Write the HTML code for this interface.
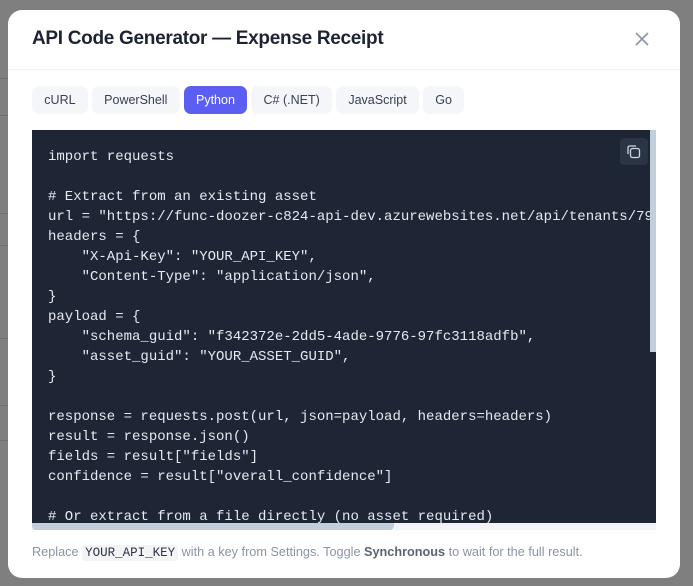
<!DOCTYPE html>
<html><head><style>
*{box-sizing:border-box;margin:0;padding:0}
body{width:693px;height:586px;background:#7f7f7f;position:relative;overflow:hidden;font-family:"Liberation Sans",sans-serif}
.bgl{position:absolute;left:0;width:8px;height:1px;background:#6f6f6f}
.modal{position:absolute;left:8px;top:10px;width:672px;height:568px;background:#fff;border-radius:14px;overflow:hidden}
.hd{height:60px;border-bottom:1px solid #eef0f3;position:relative}
.hd h1{position:absolute;left:24px;top:18px;font-size:19px;font-weight:600;color:#1c2434;letter-spacing:-0.3px}
.x{position:absolute;left:626px;top:21px}
.tabs{position:absolute;left:24px;top:76px;display:flex;gap:4px}
.tab{height:28px;padding:0 12.3px;line-height:28px;font-size:12.5px;color:#374151;background:#f5f6fa;border-radius:7px}
.tab.on{background:#5b5ef0;color:#fff}
.code{position:absolute;left:24px;top:120px;width:624px;height:393px;background:#1e2635;overflow:hidden}
pre{position:absolute;left:16px;top:17px;font-family:"Liberation Mono",monospace;font-size:14px;line-height:20px;color:#e6e9ef;white-space:pre}
.vs{position:absolute;left:642px;top:120px;width:6px;height:222px;background:#c3cedb}
.hs{position:absolute;left:24px;top:513px;width:624px;height:7px;background:#f1f3f6}
.hs div{width:362px;height:7px;background:#c3cedb;border-radius:0 0 4px 4px}
.cp{position:absolute;left:612px;top:128px;width:28px;height:27px;background:#2c3546;border-radius:4px}
.ft{position:absolute;left:24px;top:535px;font-size:12.7px;color:#8a94a6}
.ft code{font-family:"Liberation Mono",monospace;background:#f3f4f6;color:#2c3546;padding:1px 3px;border-radius:3px;font-size:12.5px}
.ft b{color:#5b6477}
</style></head><body>
<div class="bgl" style="top:78px"></div><div class="bgl" style="top:115px"></div><div class="bgl" style="top:213px"></div><div class="bgl" style="top:245px"></div><div class="bgl" style="top:338px"></div><div class="bgl" style="top:405px"></div><div class="bgl" style="top:440px"></div>
<div class="modal">
<div class="hd"><h1>API Code Generator — Expense Receipt</h1>
<svg class="x" width="16" height="16" viewBox="0 0 16 16"><path d="M2 2L14 14M14 2L2 14" stroke="#8a94a6" stroke-width="1.6" fill="none"/></svg></div>
<div class="tabs"><div class="tab">cURL</div><div class="tab">PowerShell</div><div class="tab on">Python</div><div class="tab">C# (.NET)</div><div class="tab">JavaScript</div><div class="tab">Go</div></div>
<div class="code"><pre>import requests

# Extract from an existing asset
url = "https://func-doozer-c824-api-dev.azurewebsites.net/api/tenants/79
headers = {
    "X-Api-Key": "YOUR_API_KEY",
    "Content-Type": "application/json",
}
payload = {
    "schema_guid": "f342372e-2dd5-4ade-9776-97fc3118adfb",
    "asset_guid": "YOUR_ASSET_GUID",
}

response = requests.post(url, json=payload, headers=headers)
result = response.json()
fields = result["fields"]
confidence = result["overall_confidence"]

# Or extract from a file directly (no asset required)</pre></div>
<div class="cp"><svg width="28" height="27" viewBox="0 0 28 27"><rect x="10.5" y="10.5" width="9" height="9" rx="2" stroke="#cfd6e0" stroke-width="1.3" fill="none"/><path d="M8 16V9.5A1.5 1.5 0 0 1 9.5 8H16" stroke="#cfd6e0" stroke-width="1.3" fill="none"/></svg></div>
<div class="vs"></div>
<div class="hs"><div></div></div>
<div class="ft">Replace <code>YOUR_API_KEY</code> with a key from Settings. Toggle <b>Synchronous</b> to wait for the full result.</div>
</div>
</body></html>
